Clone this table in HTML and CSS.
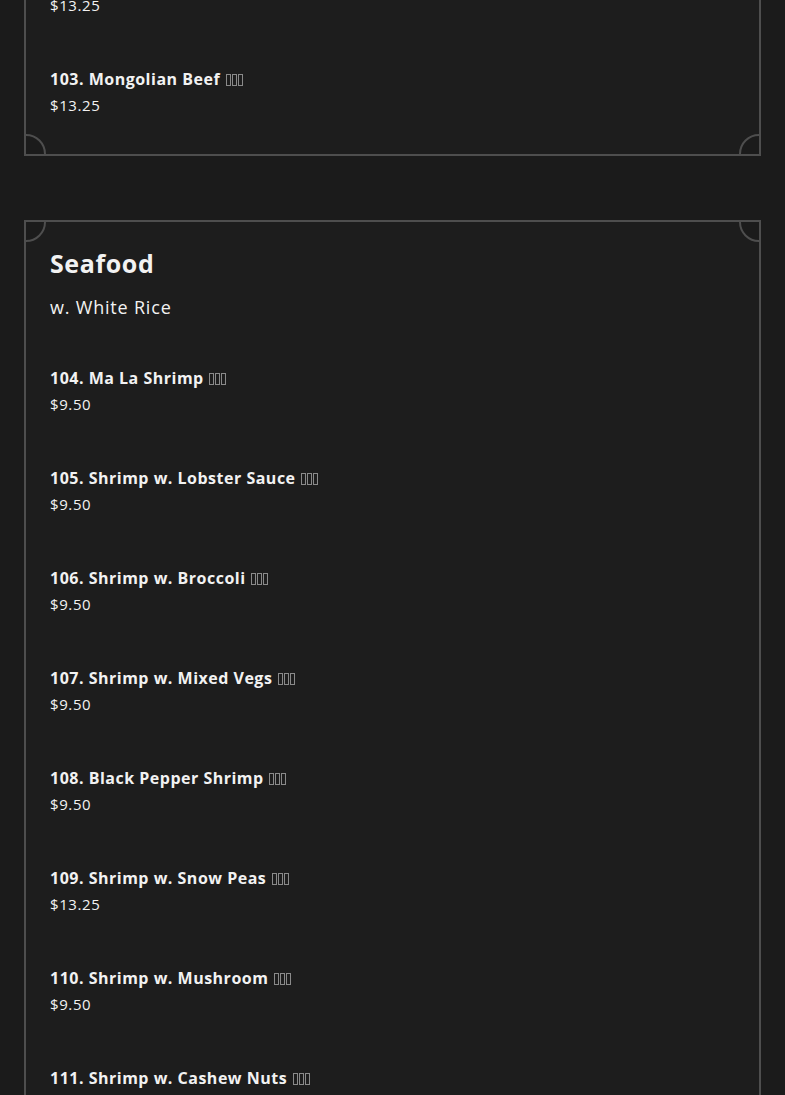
FILE: index.html
```html
<!DOCTYPE html>
<html lang="en">
<head>
<meta charset="utf-8">
<title>Menu</title>
<link rel="stylesheet" href="styles.css">
</head>
<body>
<section class="card card-continued">
  <span class="corner bl"></span><span class="corner br"></span>
  <div class="items">
    <div class="item"><div class="price">$13.25</div></div>
    <div class="item">
      <div class="name">103. Mongolian Beef <span class="tofu"><i></i><i></i><i></i></span></div>
      <div class="price">$13.25</div>
    </div>
  </div>
</section>

<section class="card">
  <span class="corner tl"></span><span class="corner tr"></span>
  <h2 class="title">Seafood</h2>
  <p class="subtitle">w. White Rice</p>
  <div class="items">
    <div class="item"><div class="name">104. Ma La Shrimp <span class="tofu"><i></i><i></i><i></i></span></div><div class="price">$9.50</div></div>
    <div class="item"><div class="name">105. Shrimp w. Lobster Sauce <span class="tofu"><i></i><i></i><i></i></span></div><div class="price">$9.50</div></div>
    <div class="item"><div class="name">106. Shrimp w. Broccoli <span class="tofu"><i></i><i></i><i></i></span></div><div class="price">$9.50</div></div>
    <div class="item"><div class="name">107. Shrimp w. Mixed Vegs <span class="tofu"><i></i><i></i><i></i></span></div><div class="price">$9.50</div></div>
    <div class="item"><div class="name">108. Black Pepper Shrimp <span class="tofu"><i></i><i></i><i></i></span></div><div class="price">$9.50</div></div>
    <div class="item"><div class="name">109. Shrimp w. Snow Peas <span class="tofu"><i></i><i></i><i></i></span></div><div class="price">$13.25</div></div>
    <div class="item"><div class="name">110. Shrimp w. Mushroom <span class="tofu"><i></i><i></i><i></i></span></div><div class="price">$9.50</div></div>
    <div class="item"><div class="name">111. Shrimp w. Cashew Nuts <span class="tofu"><i></i><i></i><i></i></span></div><div class="price">$9.50</div></div>
  </div>
</section>
</body>
</html>
```
FILE: styles.css
```css
html, body {
  margin: 0;
  background: #1b1b1b;
}
body {
  padding: 0 24px;
  font-family: "Open Sans", "DejaVu Sans", sans-serif;
  color: #f2f2f2;
  overflow: hidden;
  height: 1095px;
}
.card {
  position: relative;
  overflow: hidden;
  background: #1d1d1d;
  border: 2px solid #4e4e4e;
  padding: 23px 24px 36px;
  margin-top: 64px;
}
.card-continued {
  margin-top: -8px;
  border-top: none;
  padding-top: 0;
}
.corner {
  position: absolute;
  width: 36px;
  height: 36px;
  border: 2px solid #4e4e4e;
  border-radius: 50%;
  background: #1b1b1b;
}
.corner.tl { top: -20px; left: -20px; }
.corner.tr { top: -20px; right: -20px; }
.corner.bl { bottom: -20px; left: -20px; }
.corner.br { bottom: -20px; right: -20px; }
.title {
  margin: 0;
  font-size: 25px;
  line-height: 36px;
  font-weight: 700;
  letter-spacing: 0.6px;
}
.subtitle {
  margin: 12px 0 44px;
  font-size: 18px;
  line-height: 28px;
  font-weight: 400;
  letter-spacing: 0.8px;
}
.items {
  display: flex;
  flex-direction: column;
  gap: 48px;
}
.name {
  font-size: 16px;
  line-height: 26px;
  font-weight: 700;
  letter-spacing: 0.5px;
}
.price {
  font-size: 15px;
  line-height: 26px;
  letter-spacing: 0.6px;
}
.tofu {
  display: inline-flex;
  gap: 1px;
  margin-left: 1px;
  vertical-align: -1px;
}
.tofu i {
  display: block;
  width: 3px;
  height: 10px;
  border: 1px solid #8a8a8a;
  box-sizing: content-box;
}
```
